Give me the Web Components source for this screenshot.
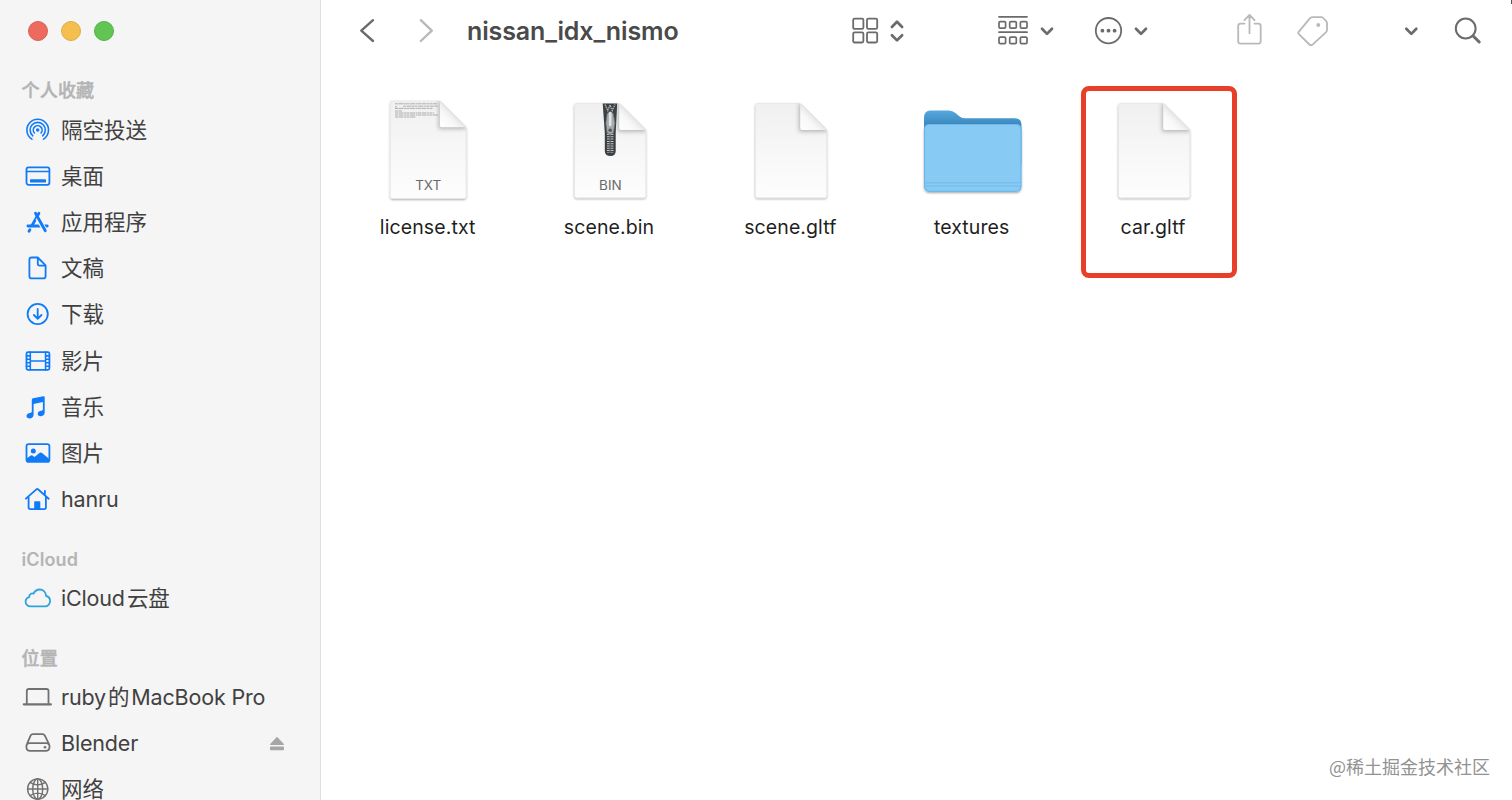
<!DOCTYPE html>
<html lang="zh-CN">
<head>
<meta charset="utf-8">
<title>nissan_idx_nismo</title>
<style>
html, body { margin: 0; height: 100%; overflow: hidden; }
body { font-family: Inter, "Noto Sans CJK SC", sans-serif; background: #fff; }
</style>
</head>
<body>
<finder-window>
  <side-bar slot="sidebar">
    <side-section heading="个人收藏" cjk>
      <side-item icon="airdrop">隔空投送</side-item>
      <side-item icon="desktop">桌面</side-item>
      <side-item icon="apps">应用程序</side-item>
      <side-item icon="doc">文稿</side-item>
      <side-item icon="download">下载</side-item>
      <side-item icon="film">影片</side-item>
      <side-item icon="music">音乐</side-item>
      <side-item icon="picture">图片</side-item>
      <side-item icon="home" latin>hanru</side-item>
    </side-section>
    <side-section heading="iCloud">
      <side-item icon="cloud" latin style="--ink:#2fa3dc">iCloud<i></i>云盘</side-item>
    </side-section>
    <side-section heading="位置" cjk>
      <side-item icon="laptop" latin style="--ink:#717171">ruby<i></i>的<i></i>MacBook Pro</side-item>
      <side-item icon="drive" latin style="--ink:#717171" eject>Blender</side-item>
      <side-item icon="globe" style="--ink:#717171">网络</side-item>
    </side-section>
  </side-bar>
  <tool-bar slot="toolbar">nissan_idx_nismo</tool-bar>
  <file-item kind="txt">license.txt</file-item>
  <file-item kind="bin">scene.bin</file-item>
  <file-item kind="plain">scene.gltf</file-item>
  <file-item kind="folder">textures</file-item>
  <file-item kind="plain" marked>car.gltf</file-item>
  <span slot="credit">@稀土掘金技术社区</span>
</finder-window>

<script>
const define = (name, render) => customElements.define(name, class extends HTMLElement {
  connectedCallback() {
    if (this.shadowRoot) return;
    this.attachShadow({ mode: 'open' }).innerHTML = render(this);
  }
});

define('finder-window', () => `
<style>
:host { display: flex; position: relative; width: 1512px; height: 800px; overflow: hidden; background: #fff; }
main { flex: 1; display: flex; flex-direction: column; }
.files { display: flex; padding: 33px 0 0 16px; flex: 1; }
footer { display: flex; justify-content: flex-end; padding: 0 22px 21px 0; font: 18px/26px "Noto Sans CJK SC", sans-serif; color: #929292; }
.corner { position: absolute; right: 0; top: 0; width: 1px; height: 4px; background: #555; }
</style>
<slot name="sidebar"></slot>
<main>
  <slot name="toolbar"></slot>
  <div class="files"><slot></slot></div>
  <footer><slot name="credit"></slot></footer>
</main>
<div class="corner"></div>`);

define('side-bar', () => `
<style>
:host { display: block; box-sizing: border-box; width: 321px; height: 800px; overflow: hidden; background: #f5f5f5; border-right: 1px solid #dedede; flex: none; }
.lights { display: flex; gap: 13px; padding: 21px 0 0 28px; height: 55.4px; }
.lights b { box-sizing: border-box; width: 20px; height: 20px; border-radius: 50%; background: #ec6a5e; border: 1px solid #da6056; }
.lights b:nth-child(2) { background: #f5bf4f; border-color: #dfac45; }
.lights b:nth-child(3) { background: #61c554; border-color: #55b149; }
</style>
<div class="lights"><b></b><b></b><b></b></div>
<slot></slot>`);

define('side-section', el => `
<style>
:host { display: block; margin-bottom: 22.6px; }
h2 { margin: 0; height: 30.2px; padding-left: 21.5px; font-size: 18px; line-height: 30px; font-weight: 600; color: #b4b4b4; letter-spacing: .1px; }
:host([cjk]) h2 { font-weight: 500; letter-spacing: .2px; -webkit-text-stroke: .45px #b4b4b4; }
</style>
<h2>${el.getAttribute('heading')}</h2><slot></slot>`);

const glyphs = {
  airdrop: `<g class="s" stroke-width="1.6"><path d="M11.9 27.2A10.8 10.8 0 1 1 23.5 27.2"/><path d="M12.8 23.8A7.6 7.6 0 1 1 22.6 23.8"/><path d="M14.4 21A4.4 4.4 0 1 1 21 21"/></g><circle class="f" cx="17.7" cy="18" r="1.8"/>`,
  desktop: `<rect class="s" x="6.5" y="9.3" width="22.9" height="17.5" rx="2"/><path class="s" d="M6.5 13.4H29.4" stroke-width="1.5"/><rect class="f" x="10" y="21.2" width="16" height="3.4" rx=".6"/>`,
  apps: `<g class="s" stroke-width="2.8"><path d="M7.9 22H27.2"/><path d="M18.9 9.2L12 21.5M9.9 25.7L9 27.2"/><path d="M17.7 13.8L25.6 27.6" stroke="#f5f5f5" stroke-width="5" stroke-linecap="butt"/><path d="M15.5 9.2L25.3 26.8"/></g>`,
  doc: `<path class="s" d="M17.8 7.5H11.6Q9.4 7.5 9.4 9.7V26.2Q9.4 28.4 11.6 28.4H23.4Q25.6 28.4 25.6 26.2V15.3ZM17.8 7.5V13.8Q17.8 15.6 19.6 15.6H25.6"/>`,
  download: `<circle class="s" cx="17.7" cy="18" r="10.1"/><path class="s" d="M17.7 13V22.6M13.9 19L17.7 22.8L21.5 19"/>`,
  film: `<rect class="s" x="6.5" y="9.2" width="22.9" height="17.6" rx="1.5"/><path class="s" stroke-width="1.6" d="M10.3 9V27M25.6 9V27M10.3 18H25.6M6.5 12.9H10.3M6.5 16.3H10.3M6.5 19.7H10.3M6.5 23.2H10.3M25.6 12.9H29.4M25.6 16.3H29.4M25.6 19.7H29.4M25.6 23.2H29.4"/>`,
  music: `<path class="f" d="M11.8 10.8Q11.8 9.6 13 9.3L23.5 7.2Q24.7 7 24.7 8.2V23.5C24.7 26 22.6 27.3 20.6 27.3C18.8 27.3 17.7 26.3 17.7 24.8C17.7 23 19.3 22.1 21.4 21.8Q22.9 21.5 22.9 20.3V13L13.6 14.9V25.6C13.6 28.3 11.6 29.6 9.6 29.6C7.7 29.6 6.5 28.6 6.5 27.1C6.5 25.3 8 24.4 10.2 24.1Q11.8 23.8 11.8 22.6Z"/>`,
  picture: `<rect class="s" x="6.5" y="9.1" width="22.9" height="17.8" rx="2.2"/><circle class="f" cx="13.3" cy="15.9" r="2.5"/><path class="f" d="M6.5 23.5L10.8 20.4Q11.7 19.9 12.5 20.5L14.5 21.9L19.7 17.8Q20.7 17 21.7 17.8L29.4 24V27H6.5Z"/>`,
  home: `<path class="s" d="M5.9 17.7L16.4 8.3Q17.2 7.7 18 8.3L28.7 17.7M24.9 13.8V9.8M8.6 16V26.4Q8.6 28.1 10.3 28.1H24.2Q25.9 28.1 25.9 26.4V16"/><path class="f" d="M14.2 28.5V21Q14.2 20.2 15 20.2H19.5Q20.3 20.2 20.3 21V28.5Z"/>`,
  cloud: `<path class="s" d="M11 26.4C7.6 26.4 5.6 24.3 5.6 21.8C5.6 19.4 7.3 17.7 9.2 17.2C9.1 14.5 11.3 13 13.6 13.6C14.7 11.1 17 9.5 19.7 9.5C23.3 9.5 25.9 12.2 26.1 16C28.6 16.6 30.1 18.6 30.1 21C30.1 24 27.8 26.4 25 26.4Z"/>`,
  laptop: `<path class="s" d="M6.8 24V12Q6.8 10 8.8 10H26.5Q28.5 10 28.5 12V24"/><path class="s" stroke-width="2.2" stroke-linecap="butt" d="M3.8 25.3H30.9"/>`,
  drive: `<path class="s" d="M10.8 10.2Q11.4 9.1 12.8 9.1H22.6Q24 9.1 24.6 10.2L28.9 18.8Q29.5 20 29.5 21.4V21.8Q29.5 25.9 25.6 25.9H10Q6.4 25.9 6.4 21.8V21.4Q6.4 20 7 18.8ZM6.6 20Q7.5 18.2 9.8 18.2H26Q28.4 18.2 29.3 20"/><circle class="f" cx="25" cy="22.2" r="1.3"/>`,
  globe: `<g class="s" stroke-width="1.4"><circle cx="17.7" cy="18" r="10.1"/><ellipse cx="17.7" cy="18" rx="5" ry="10.1"/><path d="M17.7 8V28M7.6 18H27.8M10 11.3Q17.7 16.5 25.4 11.3M10 24.7Q17.7 19.5 25.4 24.7" /></g>`
};

define('side-item', el => `
<style>
:host { display: flex; align-items: center; height: 46.2px; padding-left: 20px; font-size: 21.5px; line-height: 30px; color: #414141; white-space: nowrap; }
:host([latin]) { letter-spacing: -.17px; }
svg { flex: none; display: block; }
.s { fill: none; stroke: var(--ink, #107bf8); stroke-width: 1.8; stroke-linecap: round; stroke-linejoin: round; }
.f { fill: var(--ink, #107bf8); }
span { margin-left: 5px; flex: 1; }
::slotted(i) { display: inline-block; width: 2px; }
.eject { margin-right: 35px; }
</style>
<svg width="36" height="36">${glyphs[el.getAttribute('icon')].replace(/(class="s"[^>]*?)stroke-width="([\d.]+)"/g, '$1style="stroke-width:$2"')}</svg>
<span><slot></slot></span>
${el.hasAttribute('eject') ? `<svg class="eject" width="16" height="16" fill="#a6a6a6"><path d="M7.3 2.4Q8 1.7 8.7 2.4L14.8 9Q15.4 10 14.3 10H1.7Q.6 10 1.2 9Z"/><rect x="1" y="11.6" width="14" height="3.6" rx=".8"/></svg>` : ''}`);

const chevron = (x, left) => `<svg width="20" height="62" style="margin-left:${left}px"><path d="M${x - 5} 28.7L${x} 33.9L${x + 5} 28.7" stroke-width="2.7"/></svg>`;

define('tool-bar', () => `
<style>
:host { display: flex; height: 62px; color: #4a4a4a; }
svg { flex: none; display: block; fill: none; stroke: #6b6b6b; stroke-width: 1.8; stroke-linecap: round; stroke-linejoin: round; }
.dim { stroke: #b9b9b9; }
.solid { fill: #6b6b6b; stroke: none; }
h1 { margin: 0 0 0 26px; width: 381px; font-size: 25px; line-height: 63px; font-weight: 600; letter-spacing: -.12px; white-space: nowrap; }
</style>
<svg width="30" height="62" style="margin-left:34px"><path d="M18 20.2L6.3 30.6L18 41" stroke-width="2.4"/></svg>
<svg class="dim" width="26" height="62" style="margin-left:30px"><path d="M5.8 20.2L16.8 30.6L5.8 41" stroke-width="2.4"/></svg>
<h1><slot></slot></h1>
<svg width="58" height="62"><rect x="5.2" y="18.7" width="10.2" height="10.2" rx="1.4"/><rect x="19" y="18.7" width="10.2" height="10.2" rx="1.4"/><rect x="5.2" y="32.3" width="10.2" height="10.2" rx="1.4"/><rect x="19" y="32.3" width="10.2" height="10.2" rx="1.4"/><path d="M43.9 27L49 21.8L54.1 27M43.9 35.2L49 40.4L54.1 35.2" stroke-width="2.7"/></svg>
<svg width="34" height="62" style="margin-left:90px"><path d="M3 16.8H31M3 32.2H31"/><g stroke-width="1.7"><rect x="3" y="21.6" width="6.6" height="6.6" rx="1.2"/><rect x="13.7" y="21.6" width="6.6" height="6.6" rx="1.2"/><rect x="24.4" y="21.6" width="6.6" height="6.6" rx="1.2"/><rect x="3" y="37.1" width="6.6" height="6.6" rx="1.2"/><rect x="13.7" y="37.1" width="6.6" height="6.6" rx="1.2"/><rect x="24.4" y="37.1" width="6.6" height="6.6" rx="1.2"/></g></svg>
${chevron(10, 7)}
<svg width="34" height="62" style="margin-left:34px"><circle cx="17.5" cy="30.7" r="12.7"/><g class="solid"><circle cx="11.4" cy="30.7" r="1.9"/><circle cx="17.5" cy="30.7" r="1.9"/><circle cx="23.6" cy="30.7" r="1.9"/></g></svg>
${chevron(10, 6)}
<svg class="dim" width="30" height="62" style="margin-left:84px"><path d="M9.5 23.6H5.6Q3.2 23.6 3.2 26V41.3Q3.2 43.7 5.6 43.7H23.3Q25.7 43.7 25.7 41.3V26Q25.7 23.6 23.3 23.6H19.5M14.5 33.2V15.4M9.4 20.2L14.5 15L19.6 20.2"/></svg>
<svg class="dim" width="36" height="62" style="margin-left:30px"><path d="M15.3 17.9Q16.3 17.1 17.6 17.1H26.2Q27.4 17.1 28.2 18L31.2 21.2Q32 22.1 32 23.3V30Q32 31.2 31.1 32.1L17.3 44.8Q15.8 45.9 14.4 44.5L3.9 34.2Q2.6 32.9 4.1 31.4Z"/><circle cx="23.3" cy="25" r="1.9" fill="#b9b9b9" stroke="none"/></svg>
${chevron(10.3, 70)}
<svg width="36" height="62" style="margin-left:31px"><circle cx="13.7" cy="28.5" r="9.9" stroke-width="2"/><path d="M21.4 36.2L27.2 42" stroke-width="3"/></svg>`);

const sheet = (x, y, w, h, fold) => {
  const r = x + w, b = y + h, f = r - fold;
  return `<path d="M${x + 2} ${y}H${f}L${r} ${y + fold}V${b - 2}Q${r} ${b} ${r - 2} ${b}H${x + 2}Q${x} ${b} ${x} ${b - 2}V${y + 2}Q${x} ${y} ${x + 2} ${y}Z" fill="url(#paper)" stroke="#e4e4e4" stroke-width=".6" filter="url(#drop)"/>
  <clipPath id="c"><path d="M${x} ${y}H${f}L${r} ${y + fold}V${b}H${x}Z"/></clipPath>
  <g clip-path="url(#c)"><path d="M${f - 1} ${y}V${y + fold + 1.5}H${r}V${y}Z" fill="#777" opacity=".55" filter="url(#soft)"/></g>
  <path d="M${f} ${y}L${r} ${y + fold}H${f + 2}Q${f} ${y + fold} ${f} ${y + fold - 2}Z" fill="url(#curl)"/>`;
};
const defs = `<defs>
<linearGradient id="paper" x1="0" y1="0" x2="0" y2="1"><stop offset="0" stop-color="#f0f0f0"/><stop offset=".5" stop-color="#f7f7f7"/><stop offset="1" stop-color="#fdfdfd"/></linearGradient>
<linearGradient id="curl" x1="0" y1="1" x2=".55" y2=".45"><stop offset="0" stop-color="#fff"/><stop offset=".6" stop-color="#f8f8f8"/><stop offset="1" stop-color="#e4e4e4"/></linearGradient>
<linearGradient id="back" x1="0" y1="0" x2="0" y2="1"><stop offset="0" stop-color="#57a9dc"/><stop offset=".22" stop-color="#3f8dc4"/></linearGradient>
<filter id="drop" x="-10%" y="-10%" width="120%" height="120%"><feDropShadow dx="0" dy="1" stdDeviation=".8" flood-opacity=".36"/></filter>
<filter id="soft" x="-30%" y="-30%" width="160%" height="160%"><feGaussianBlur stdDeviation="2"/></filter></defs>`;
const kind = {
  plain: () => sheet(19.6, 8.5, 71.1, 94.3, 26.5),
  txt: () => sheet(17.3, 6, 75.7, 97.4, 26.2) +
    `<g stroke="#8d8d8d" stroke-width=".9" opacity=".75"><path d="M22 8.8H64M22 11.8H24M30 11.2H65M22 13.4H60M22 16H29M22 18H61M22 20H65M22 22H43" stroke-dasharray="3 .5 5 .6 2 .4"/></g><text x="55.2" y="94.6">TXT</text>`,
  bin: () => sheet(19.6, 8.5, 71.1, 94.3, 26.5) +
    `<path d="M47.7 8.5H62.2L60.7 38V56Q60.7 61 55.5 61Q49.8 61 49.8 56V38Z" fill="#3c4043"/>
    <path d="M50 9.5L52.8 15.5L55 10L57.2 15.5L60 9.5" fill="none" stroke="#b4b9ba" stroke-width="1.3" stroke-dasharray="1.5 .7"/>
    <path d="M55.2 39V58" stroke="#c5caca" stroke-width="6.5" stroke-dasharray="1 1.3"/><path d="M55.2 39V58" stroke="#5b5f62" stroke-width="1.3"/>
    <path d="M52.2 18.5Q55.2 15 58.2 18.5L60 28L58.4 38Q55.2 41 52 38L50.8 28Z" fill="#a5abac" stroke="#666b6d" stroke-width=".8"/>
    <path d="M55.2 18V30" stroke="#dfe3e3" stroke-width="2.6" stroke-linecap="round"/><circle cx="55.2" cy="35.3" r="1.8" fill="#54595b"/>
    <text x="55.4" y="94.6">BIN</text>`,
  folder: () => `<path d="M7 23Q7 15.5 13.5 15.5H32Q35.5 15.5 38.5 18L42 21Q44.5 23.2 48 23.2H97.5Q104.5 23.2 104.5 30V70H7Z" fill="url(#back)"/>
    <path d="M7 35Q7 29 13 29H98.5Q104.5 29 104.5 35V91Q104.5 97 98.5 97H13Q7 97 7 91Z" fill="#87cbf5" filter="url(#drop)"/>
    <path d="M7.6 35Q7.6 29.5 13 29.5H98.5Q103.9 29.5 103.9 35V91Q103.9 96 98.5 96.4H13Q7.6 96 7.6 91Z" fill="none" stroke="#6fb9e8" stroke-width="1.2"/>
    <path d="M8 87.8H103.5M8.5 91H103" stroke="#70b9e6" stroke-width="1"/>`
};

define('file-item', el => `
<style>
:host { display: flex; flex-direction: column; align-items: center; position: relative; width: 181.35px; flex: none; color: #1f1f1f; }
svg { display: block; margin-left: 1px; }
text { font: 13.5px Inter, sans-serif; fill: #6a6a6a; text-anchor: middle; }
span { margin-top: 7px; font-size: 19.5px; line-height: 30px; letter-spacing: .1px; white-space: nowrap; }
.mark { position: absolute; box-sizing: border-box; left: 18.8px; top: -9px; width: 155.4px; height: 191.5px; border: 5px solid #e84028; border-radius: 8px; }
</style>
<svg width="110" height="110">${defs}${kind[el.getAttribute('kind')]()}</svg>
<span><slot></slot></span>
${el.hasAttribute('marked') ? '<div class="mark"></div>' : ''}`);
</script>
</body>
</html>
